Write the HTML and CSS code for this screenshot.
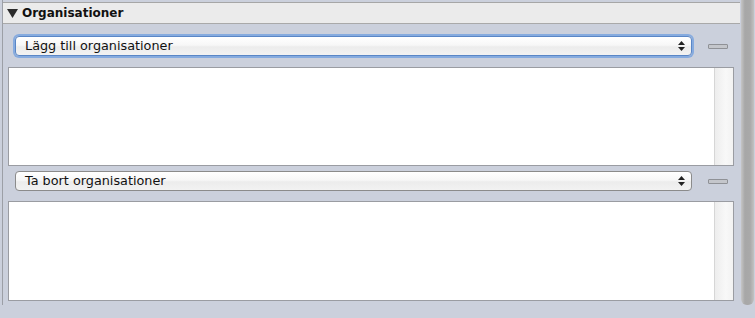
FILE: index.html
```html
<!DOCTYPE html>
<html lang="sv">
<head>
<meta charset="utf-8">
<title>Organisationer</title>
<link rel="stylesheet" href="styles.css">
</head>
<body>
<div class="window">
  <div class="pane">
    <div class="header">
      <svg class="disclosure" width="11" height="9" viewBox="0 0 11 9"><polygon points="0,0 11,0 5.5,9" fill="#2b2b2b"/></svg>
      <span class="title">Organisationer</span>
    </div>
    <div class="content">
      <div class="row row-first">
        <div class="popup focused">
          <span class="popup-label">Lägg till organisationer</span>
          <svg class="arrows" width="7" height="10" viewBox="0 0 7 10"><polygon points="3.5,0 7,4 0,4" fill="#222"/><polygon points="0,6 7,6 3.5,10" fill="#222"/></svg>
        </div>
        <div class="minus"></div>
      </div>
      <div class="list list-first">
        <div class="list-body"></div>
        <div class="list-scroll"></div>
      </div>
      <div class="row row-second">
        <div class="popup">
          <span class="popup-label">Ta bort organisationer</span>
          <svg class="arrows" width="7" height="10" viewBox="0 0 7 10"><polygon points="3.5,0 7,4 0,4" fill="#222"/><polygon points="0,6 7,6 3.5,10" fill="#222"/></svg>
        </div>
        <div class="minus"></div>
      </div>
      <div class="list list-second">
        <div class="list-body"></div>
        <div class="list-scroll"></div>
      </div>
    </div>
  </div>
  <div class="vscroll"></div>
</div>
</body>
</html>
```

FILE: styles.css
```css
html, body {
  margin: 0;
  padding: 0;
}

body {
  width: 755px;
  height: 318px;
  overflow: hidden;
  background: #cbd0dc;
  font-family: "DejaVu Sans", "Liberation Sans", sans-serif;
  color: #111;
}

.window {
  display: flex;
  height: 305px;
}

.pane {
  flex: 0 0 737px;
  margin-left: 2px;
  border-left: 1px solid #9c9fa6;
  display: flex;
  flex-direction: column;
}

.header {
  margin-top: 2px;
  height: 20px;
  border-top: 1px solid #a6a6a6;
  border-bottom: 1px solid #a9a9a9;
  background: #ebebeb;
  display: flex;
  align-items: center;
  padding-left: 4px;
}

.disclosure {
  display: block;
  flex: 0 0 auto;
  margin-top: 1px;
}

.title {
  margin-left: 4px;
  font-weight: bold;
  font-size: 12px;
  line-height: 20px;
  color: #111;
}

.content {
  padding-left: 5px;
  display: flex;
  flex-direction: column;
}

.row {
  display: flex;
  align-items: center;
  width: 726px;
  padding-left: 7px;
  box-sizing: border-box;
}

.row-first {
  margin-top: 12px;
}

.row-second {
  margin-top: 5px;
}

.popup {
  flex: 0 0 677px;
  box-sizing: border-box;
  height: 20px;
  border: 1px solid #8b8b8b;
  border-radius: 4px;
  background: linear-gradient(to bottom, #ffffff 0%, #f7f7f7 45%, #ececec 55%, #f2f2f2 100%);
  display: flex;
  align-items: center;
  padding-left: 9px;
  padding-right: 6px;
}

.popup.focused {
  border-color: #5a86c6;
  box-shadow: 0 0 0 2px #86abdf;
}

.popup-label {
  flex: 1 1 auto;
  font-size: 12.8px;
  line-height: 18px;
  color: #111;
  white-space: nowrap;
}

.arrows {
  display: block;
  flex: 0 0 auto;
}

.minus {
  flex: 0 0 auto;
  margin-left: 16px;
  width: 20px;
  height: 5px;
  box-sizing: border-box;
  border: 1px solid #8f9196;
  border-radius: 1px;
  background: #c4c6cb;
}

.list {
  width: 726px;
  box-sizing: border-box;
  border: 1px solid #9a9ca2;
  background: #ffffff;
  display: flex;
}

.list-first {
  margin-top: 11px;
  height: 99px;
}

.list-second {
  margin-top: 10px;
  height: 100px;
}

.list-body {
  flex: 1 1 auto;
}

.list-scroll {
  flex: 0 0 18px;
  border-left: 1px solid #d6d6d6;
  background: linear-gradient(to right, #ededed, #f8f8f8 60%, #f2f2f2);
}

.vscroll {
  flex: 0 0 13px;
  margin-left: 1px;
  border-radius: 0 0 6px 6px;
  background: linear-gradient(to right, #c6c6c6 0%, #a7a7a7 30%, #a9a9a9 70%, #c2c2c2 100%);
}
```
